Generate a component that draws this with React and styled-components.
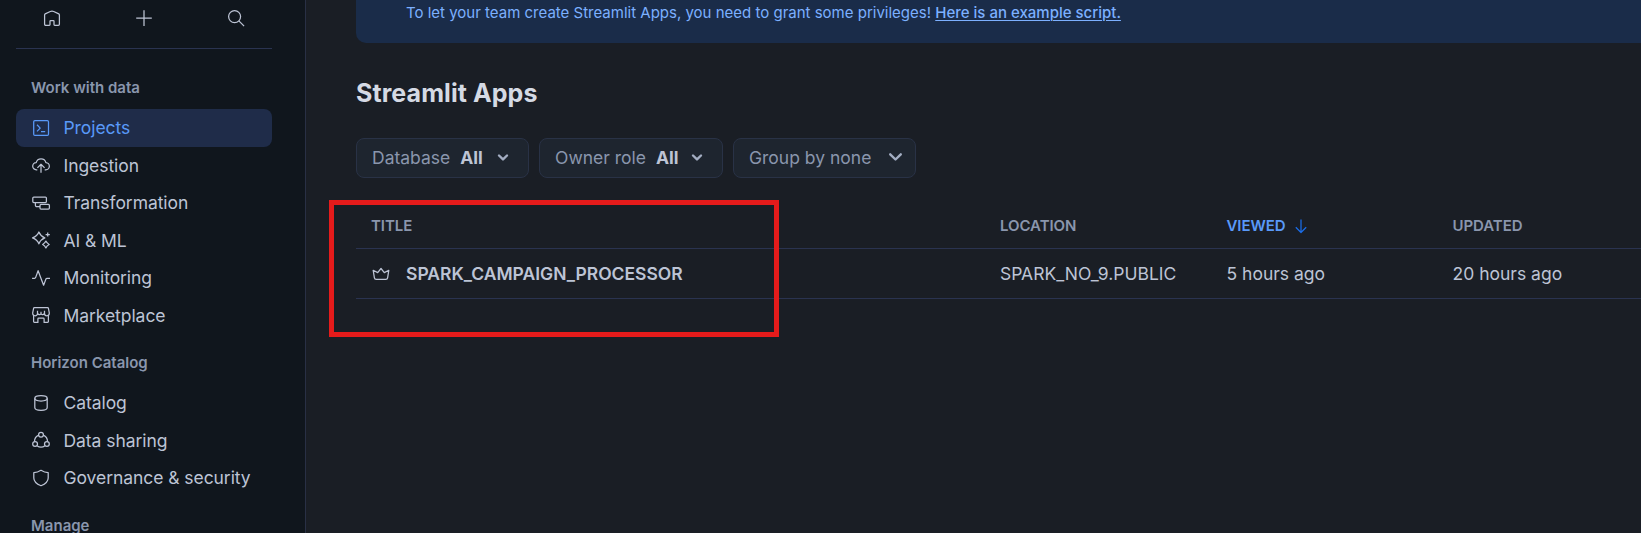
import React from "react";
import styled, { createGlobalStyle } from "styled-components";

const GlobalStyle = createGlobalStyle`
  *, *::before, *::after { box-sizing: border-box; }
  html, body { margin: 0; padding: 0; background: #1a1e25; }
  body { font-family: Inter, "Liberation Sans", sans-serif; overflow: hidden; }
`;

const Page = styled.div`
  display: flex;
  width: 100%;
  height: 533px;
  overflow: hidden;
  background: #1a1e25;
  color: #bdc4d5;
`;

const Sidebar = styled.aside`
  flex: none;
  width: 306px;
  height: 533px;
  padding: 0 33px 0 16px;
  overflow: hidden;
  background: #10161d;
  border-right: 1px solid #293045;
`;

const QuickActions = styled.div`
  display: flex;
  justify-content: space-between;
  height: 49px;
  padding: 8px 26px 0;
  border-bottom: 1px solid #2a3350;
`;

const IconButton = styled.button`
  display: flex;
  width: 20px;
  height: 20px;
  padding: 0;
  border: 0;
  background: none;
  color: #bdc4d5;
`;

const Nav = styled.nav`
  padding-top: 10px;
`;

const SectionLabel = styled.h2`
  height: 50px;
  margin: 0;
  padding: 17px 15px 0;
  font-size: 15px;
  line-height: 24px;
  font-weight: 600;
  color: #8a96ad;
`;

const NavItem = styled.a`
  display: flex;
  align-items: center;
  gap: 12.5px;
  height: 37.5px;
  padding-left: 15px;
  border-radius: 8px;
  font-size: 17.5px;
  line-height: 25px;
  letter-spacing: -0.06px;
  white-space: nowrap;
  color: ${(p) => (p.$active ? "#5999f8" : "#bdc4d5")};
  background: ${(p) => (p.$active ? "#1f2c49" : "transparent")};
`;

const Svg = styled.svg`
  flex: none;
  display: block;
  fill: none;
  stroke: currentColor;
  stroke-width: ${(p) => p.$weight || 1.25};
  stroke-linecap: ${(p) => p.$cap || "butt"};
  stroke-linejoin: round;
`;

const Main = styled.main`
  flex: 1;
  min-width: 0;
  padding-left: 50px;
`;

const Banner = styled.div`
  height: 43px;
  padding: 1px 0 0 50px;
  border-radius: 0 0 0 10px;
  background: #1a2c49;
  color: #7cb0ff;
  font-size: 15px;
  line-height: 24px;
  white-space: nowrap;
`;

const BannerLink = styled.a`
  font-weight: 500;
  text-decoration: underline;
  text-underline-offset: 2px;
  text-decoration-thickness: 1px;
`;

const Title = styled.h1`
  margin: 35px 0 0;
  font-size: 25px;
  line-height: 30px;
  letter-spacing: 0.08px;
  font-weight: 700;
  color: #d5dae4;
`;

const Filters = styled.div`
  display: flex;
  gap: 10px;
  margin-top: 30px;
`;

const FilterButton = styled.button`
  display: flex;
  align-items: center;
  width: ${(p) => p.$width}px;
  height: 40px;
  padding: 0 ${(p) => p.$endPadding}px 2px 15px;
  border: 1px solid #293246;
  border-radius: 8px;
  background: #1e252f;
  color: #8a96ad;
  font-family: inherit;
  font-size: 17.5px;
  line-height: 25px;
  white-space: nowrap;

  svg {
    margin-left: auto;
    color: #a3adc2;
  }
`;

const FilterValue = styled.strong`
  margin-left: 10px;
  font-weight: 700;
  color: #bdc4d5;
`;

const TableArea = styled.section`
  position: relative;
  margin-top: 24px;
`;

const Row = styled.div`
  display: grid;
  grid-template-columns: 629px 226.5px 226px 1fr;
  align-items: center;
  height: ${(p) => (p.$head ? 47 : 50)}px;
  padding-left: 15px;
  border-bottom: 1px solid #2a3350;
`;

const HeadCell = styled.div`
  display: flex;
  align-items: center;
  gap: 5px;
  padding-top: 1px;
  font-size: 15px;
  line-height: 20px;
  letter-spacing: -0.06px;
  font-weight: 600;
  color: ${(p) => (p.$sorted ? "#5999f8" : "#8a96ad")};

  svg { color: #1a6ce7; }
`;

const Cell = styled.div`
  display: flex;
  align-items: center;
  gap: 15px;
  font-size: 17.5px;
  line-height: 25px;
  font-weight: ${(p) => (p.$strong ? 600 : 400)};
  white-space: nowrap;
`;

const Highlight = styled.div`
  position: absolute;
  left: -27px;
  top: -2px;
  width: 450px;
  height: 136.5px;
  border: 5px solid #e51b1b;
`;

const Icon = ({ children, size = 20, ...rest }) => (
  <Svg width={size} height={size} viewBox={`0 0 ${size} ${size}`} {...rest}>
    {children}
  </Svg>
);

const HomeIcon = () => (
  <Icon>
    <path d="M3.7 17.3h3.6a.7.7 0 0 0 .7-.7v-3.3a.7.7 0 0 1 .7-.7h2.6a.7.7 0 0 1 .7.7v3.3a.7.7 0 0 0 .7.7h3.6a1.1 1.1 0 0 0 1.1-1.1V6.9a1.1 1.1 0 0 0-.6-1L11.7 3.5a4 4 0 0 0-3.4 0L3.2 5.9a1.1 1.1 0 0 0-.6 1v9.3a1.1 1.1 0 0 0 1.1 1.1Z" />
  </Icon>
);
const PlusIcon = () => (
  <Icon><path d="M10 2.3v15.6M2.2 10h15.6" /></Icon>
);
const SearchIcon = () => (
  <Icon><circle cx="8.6" cy="8.6" r="6" /><path d="m12.9 12.9 5.2 5.2" /></Icon>
);
const ProjectsIcon = () => (
  <Icon>
    <rect x="2.7" y="2.6" width="14.8" height="14.8" rx="1.2" />
    <path d="m6 6.8 3.2 3.3L6 13.4M10 13.6h4.2" />
  </Icon>
);
const IngestionIcon = () => (
  <Icon>
    <path d="M6.3 14.8H5.4A3.6 3.6 0 0 1 5.2 7.6 5 5 0 0 1 14.9 7.6 3.6 3.6 0 0 1 14.6 14.8h-.9M10 17.8V9.4M6.4 12.9 10 9.3l3.6 3.6" />
  </Icon>
);
const TransformIcon = () => (
  <Icon>
    <rect x="1.8" y="4.1" width="13.6" height="5.4" rx="1" />
    <rect x="9" y="11.4" width="9.4" height="4.6" rx="1" />
    <path d="M4.4 9.6v2.6a1.4 1.4 0 0 0 1.4 1.4H9" />
  </Icon>
);
const SparkleIcon = () => (
  <Icon>
    <path d="M7.900 2q1.600 4.200 5.900 5.900-4.300 1.700-5.900 5.900Q6.300 9.600 1.500 7.900 6.300 6.200 7.900 2ZM14.900 11.100q1 2.400 3.300 3.400-2.300 1-3.300 3.400-1-2.400-3.300-3.400 2.300-1 3.300-3.400ZM16.700 2.400v4.200M14.600 4.500h4.200" />
  </Icon>
);
const PulseIcon = () => (
  <Icon><path d="M1.100 10.300h2.500q.7 0 1-.7l2.500-6.900 5.500 14.500 2.400-6.300q.3-.6 1-.6h3" /></Icon>
);
const StoreIcon = () => (
  <Icon>
    <path d="M3.400 2.600h13.200q.7 0 .8.700l.9 4.500v.5a2.400 2.400 0 0 1-4.800.1 2.300 2.300 0 0 1-3.500.7 2.300 2.300 0 0 1-3.500-.7 2.400 2.400 0 0 1-4.800-.1v-.5l.9-4.500q.1-.7.800-.7ZM6.500 5.800v2.600M13.500 5.800v2.600M10 6.800v2.300M2.600 10.300v6.300q0 .8.800.8h3.500v-3.400q0-.8.8-.8h4.600q.8 0 .8.800v3.400h3.500q.8 0 .8-.8v-6.300" />
  </Icon>
);
const CatalogIcon = () => (
  <Icon>
    <ellipse cx="10" cy="5.300" rx="6.200" ry="2.700" />
    <path d="M3.800 5.300v9.300c0 1.600 2.600 2.800 6.200 2.800s6.200-1.200 6.200-2.800V5.300" />
  </Icon>
);
const SharingIcon = () => (
  <Icon>
    <circle cx="10" cy="4.700" r="2.400" />
    <circle cx="4.100" cy="14" r="2.400" />
    <circle cx="15.900" cy="14" r="2.400" />
    <path d="M7.700 5.100A7 7 0 0 0 3.500 11.600M12.300 5.100a7 7 0 0 1 4.200 6.500M6 15.700a7 7 0 0 0 8 0" />
  </Icon>
);
const ShieldIcon = () => (
  <Icon>
    <path d="M10 2.300Q13.500 4.600 17.200 4.700v5.200c0 3.400-3 6-7.200 7.800-4.200-1.800-7.200-4.400-7.200-7.800V4.700Q6.500 4.600 10 2.300Z" />
  </Icon>
);
const CrownIcon = () => (
  <Icon>
    <path d="m2.200 6.300 1.200 7.500q.2 1.600 1.800 1.600h9.600q1.600 0 1.800-1.600l1.200-7.500-4.500 2.300L10 4.500 6.700 8.600Z" />
  </Icon>
);
const Chevron = ({ size }) => (
  <Icon size={size} $weight={2.4} $cap="round">
    {size > 12 ? <path d="m2.200 4.300 5.300 5.200 5.300-5.200" /> : <path d="m2 4.500 4 3.900 4-3.900" />}
  </Icon>
);
const SortArrow = () => (
  <Icon><path d="M10 3.500v13M4.800 11.300l5.200 5.200 5.200-5.200" /></Icon>
);

const sections = [
  {
    label: "Work with data",
    items: [
      ["Projects", ProjectsIcon],
      ["Ingestion", IngestionIcon],
      ["Transformation", TransformIcon],
      ["AI & ML", SparkleIcon],
      ["Monitoring", PulseIcon],
      ["Marketplace", StoreIcon],
    ],
  },
  {
    label: "Horizon Catalog",
    items: [
      ["Catalog", CatalogIcon],
      ["Data sharing", SharingIcon],
      ["Governance & security", ShieldIcon],
    ],
  },
  { label: "Manage", items: [] },
];

export default function App() {
  return (
    <>
      <GlobalStyle />
      <Page>
        <Sidebar>
          <QuickActions>
            <IconButton aria-label="Home"><HomeIcon /></IconButton>
            <IconButton aria-label="Create"><PlusIcon /></IconButton>
            <IconButton aria-label="Search"><SearchIcon /></IconButton>
          </QuickActions>
          <Nav>
            {sections.map(({ label, items }) => (
              <React.Fragment key={label}>
                <SectionLabel>{label}</SectionLabel>
                {items.map(([name, Glyph]) => (
                  <NavItem key={name} $active={name === "Projects"}>
                    <Glyph />
                    <span>{name}</span>
                  </NavItem>
                ))}
              </React.Fragment>
            ))}
          </Nav>
        </Sidebar>
        <Main>
          <Banner>
            To let your team create Streamlit Apps, you need to grant some privileges!{" "}
            <BannerLink>Here is an example script.</BannerLink>
          </Banner>
          <Title>Streamlit Apps</Title>
          <Filters>
            <FilterButton $width={173} $endPadding={19}>
              Database<FilterValue>All</FilterValue><Chevron size={12} />
            </FilterButton>
            <FilterButton $width={184} $endPadding={19}>
              Owner role<FilterValue>All</FilterValue><Chevron size={12} />
            </FilterButton>
            <FilterButton $width={183} $endPadding={12.5}>
              Group by none<Chevron size={15} />
            </FilterButton>
          </Filters>
          <TableArea>
            <Row $head>
              <HeadCell>TITLE</HeadCell>
              <HeadCell>LOCATION</HeadCell>
              <HeadCell $sorted>VIEWED<SortArrow /></HeadCell>
              <HeadCell>UPDATED</HeadCell>
            </Row>
            <Row>
              <Cell $strong><CrownIcon /><span>SPARK_CAMPAIGN_PROCESSOR</span></Cell>
              <Cell>SPARK_NO_9.PUBLIC</Cell>
              <Cell>5 hours ago</Cell>
              <Cell>20 hours ago</Cell>
            </Row>
            <Highlight />
          </TableArea>
        </Main>
      </Page>
    </>
  );
}
